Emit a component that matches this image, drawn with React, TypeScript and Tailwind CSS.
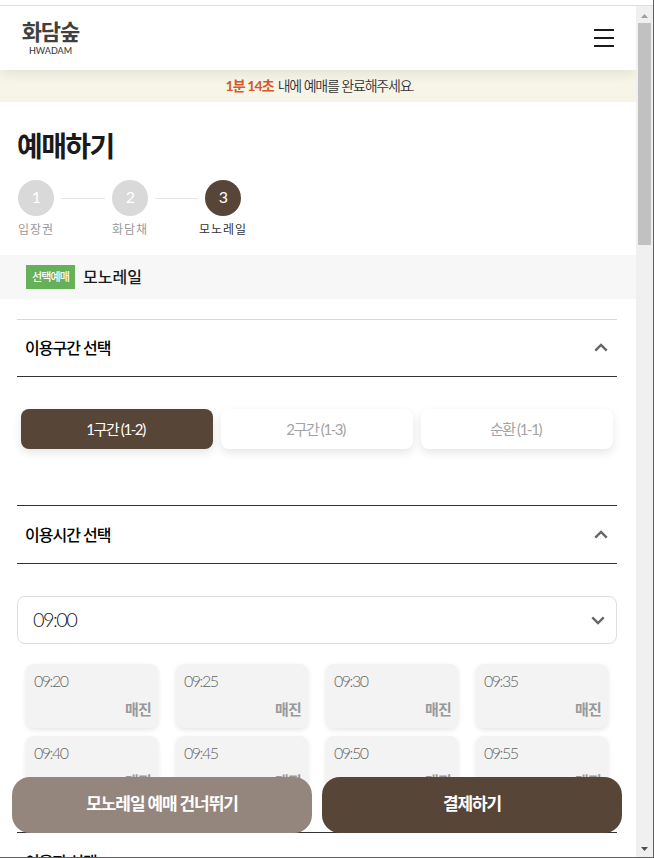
import React, { useState } from 'react';

const steps = [
  { no: 1, label: '입장권' },
  { no: 2, label: '화담채' },
  { no: 3, label: '모노레일' },
];

const sections = ['1구간 (1-2)', '2구간 (1-3)', '순환 (1-1)'];

const slots = ['09:20', '09:25', '09:30', '09:35', '09:40', '09:45', '09:50', '09:55'];

const Chevron: React.FC<{ down?: boolean }> = ({ down }) => (
  <svg width="14" height="10" viewBox="0 0 14 10" fill="none" stroke="#666" strokeWidth="2.4">
    <path d={down ? 'M1.3 2.3L7 8L12.7 2.3' : 'M1.3 7.7L7 2L12.7 7.7'} />
  </svg>
);

const SectionTitle: React.FC<{ title: string }> = ({ title }) => (
  <button className="flex h-full w-full items-center justify-between pr-[9px] pl-2 text-base font-medium tracking-[-1px] text-black">
    <span>{title}</span>
    <Chevron />
  </button>
);

const Scrollbar: React.FC = () => (
  <div className="flex w-[17px] flex-none flex-col items-center bg-[#f0f0f0]">
    <div className="flex h-[17px] items-center justify-center">
      <svg width="7" height="4" viewBox="0 0 7 4" className="mt-0.5">
        <path d="M0 4L3.5 0L7 4Z" fill="#a0a0a0" />
      </svg>
    </div>
    <div className="h-[222px] w-[13px] bg-[#c1c1c1]" />
    <div className="mt-auto flex h-[17px] items-center justify-center">
      <svg width="7" height="4" viewBox="0 0 7 4">
        <path d="M0 0L3.5 4L7 0Z" fill="#505050" />
      </svg>
    </div>
  </div>
);

const App: React.FC = () => {
  const [section, setSection] = useState(0);

  return (
    <div className="flex h-[858px] w-[654px] flex-col overflow-hidden border-r border-b border-[#606060] bg-white pt-[5px] font-['Lato','Noto_Sans_CJK_KR',sans-serif] whitespace-nowrap text-[#1a1a1a]">
      <div className="flex min-h-0 flex-1 border-t border-[#dedede]">
        <div className="relative min-w-0 flex-1 overflow-hidden">
          <header className="relative z-10 flex h-16 items-center justify-between bg-white pl-[21px] pr-[22px] shadow-[0_4px_12px_rgba(0,0,0,0.08)]">
            <div className="flex w-[59px] flex-col items-center text-[#404040]">
              <span className="text-[22px] leading-[22px] font-bold tracking-[-1px]">화담숲</span>
              <span className="mt-[3px] text-[9px] leading-[9px] font-medium">HWADAM</span>
            </div>
            <button className="flex w-5 flex-col gap-1.5" aria-label="메뉴">
              <span className="h-0.5 bg-[#1a1a1a]" />
              <span className="h-0.5 bg-[#1a1a1a]" />
              <span className="h-0.5 bg-[#1a1a1a]" />
            </button>
          </header>

          <p className="flex h-8 items-center justify-center bg-[#f7f4e8] pb-px pl-[3px] text-sm text-[#333]">
            <strong className="mr-1 font-bold tracking-[-0.9px] text-[#d25a2c]">1분 14초</strong>
            <span className="font-[350] tracking-[-1.2px]">내에 예매를 완료해주세요.</span>
          </p>

          <h1 className="mt-6 pl-[17px] text-[28px] leading-10 font-bold tracking-[-1.6px]">예매하기</h1>

          {/* Booking steps */}
          <ol className="mt-[14px] ml-[11px] flex h-[61px]">
            {steps.map((step, i) => (
              <React.Fragment key={step.no}>
                {i > 0 && <li className={`mt-[18px] h-px flex-none bg-[#e5e5e5] ${i === 1 ? 'w-11' : 'w-[43px]'}`} />}
                <li className="flex w-[50px] flex-none flex-col items-center">
                  <span
                    className={`flex size-9 items-center justify-center rounded-full pb-[3px] pl-px text-base text-white ${
                      step.no === 3 ? 'bg-[#574537]' : 'bg-[#d9d9d9]'
                    }`}
                  >
                    {step.no}
                  </span>
                  <span
                    className={`mt-[5px] text-xs leading-[18px] tracking-[0.9px] ${
                      step.no === 3 ? 'text-[#333]' : 'text-[#999]'
                    }`}
                  >
                    {step.label}
                  </span>
                </li>
              </React.Fragment>
            ))}
          </ol>

          <div className="mt-[14px] flex h-11 items-center gap-2 bg-[#f7f7f7] pl-[26px]">
            <span className="flex h-6 w-[49px] items-center justify-center bg-[#65b058] pt-px text-[11px] font-medium tracking-[-0.9px] text-white">
              선택예매
            </span>
            <span className="text-base font-medium">모노레일</span>
          </div>

          <main className="mt-5 pr-[19px] pl-[17px]">
            <div className="h-[58px] border-t border-b border-t-[#d9d9d9] border-b-[#333]">
              <SectionTitle title="이용구간 선택" />
            </div>
            <div className="mt-8 flex gap-2 px-1">
              {sections.map((name, i) => (
                <button
                  key={name}
                  onClick={() => setSection(i)}
                  className={`h-10 flex-1 rounded-lg pr-[3px] text-[15px] tracking-[-1.4px] shadow-[0_4px_10px_rgba(0,0,0,0.1)] ${
                    section === i ? 'bg-[#574537] text-white' : 'bg-white text-[#a3a3a3]'
                  }`}
                >
                  {name}
                </button>
              ))}
            </div>

            <div className="mt-14 h-[59px] border-y border-[#333]">
              <SectionTitle title="이용시간 선택" />
            </div>
            <div className="mt-8 flex h-12 items-center justify-between rounded-lg border border-[#dedede] pr-[11px] pl-[15px]">
              <span className="pb-0.5 text-xl font-light tracking-[-1.6px]">09:00</span>
              <Chevron down />
            </div>
            <div className="mt-5 grid grid-cols-4 gap-x-[18px] gap-y-2 px-[9px]">
              {slots.map((time) => (
                <div
                  key={time}
                  className="flex h-16 flex-col justify-between rounded-lg bg-[#f3f3f3] pt-1.5 pr-[7px] pb-2 pl-2 text-[#666] shadow-[0_2px_5px_rgba(0,0,0,0.1)]"
                >
                  <span className="text-base leading-[22px] font-light tracking-[-1.5px]">{time}</span>
                  <span className="text-right text-[15px] leading-[22px] font-bold tracking-[-0.8px] text-[#999]">매진</span>
                </div>
              ))}
            </div>

            <div className="mt-8 h-[58px] border-t border-[#333]">
              <SectionTitle title="이용자 선택" />
            </div>
          </main>

          {/* Fixed bottom actions */}
          <div className="absolute bottom-6 left-3 z-10 flex gap-2.5 text-[17px] font-bold tracking-[-1.1px] text-white">
            <button className="h-14 w-[300px] rounded-[18px] bg-[#95867d] pb-0.5">모노레일 예매 건너뛰기</button>
            <button className="h-14 w-[300px] rounded-[18px] bg-[#574537] pb-0.5">결제하기</button>
          </div>
        </div>
        <Scrollbar />
      </div>
    </div>
  );
};

export default App;
